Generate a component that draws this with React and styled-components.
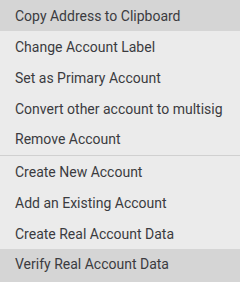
import { createGlobalStyle } from 'styled-components'
import styled from 'styled-components'

const GlobalStyle = createGlobalStyle`
  * {
    box-sizing: border-box;
  }
  body {
    margin: 0;
    background: #ebebeb;
  }
`

const groups = [
  [
    { label: 'Copy Address to Clipboard', active: true },
    { label: 'Change Account Label' },
    { label: 'Set as Primary Account' },
    { label: 'Convert other account to multisig' },
    { label: 'Remove Account' },
  ],
  [
    { label: 'Create New Account' },
    { label: 'Add an Existing Account' },
    { label: 'Create Real Account Data' },
    { label: 'Verify Real Account Data', active: true },
  ],
]

const App = () => (
  <>
    <GlobalStyle />
    <Menu>
      {groups.map((items, i) => (
        <Group key={i}>
          {items.map((item) => (
            <Item key={item.label} $active={item.active}>
              {item.label}
            </Item>
          ))}
        </Group>
      ))}
    </Menu>
  </>
)

export default App

const Menu = styled.ul`
  margin: 0;
  padding: 0;
  list-style: none;
  width: 240px;
  height: 282px;
  overflow: hidden;
  display: flex;
  flex-direction: column;
  background: #ebebeb;
  font-family: Roboto, 'Liberation Sans', sans-serif;
`

const Group = styled.li`
  display: flex;
  flex-direction: column;

  & + & {
    border-top: 1px solid #d0d0d0;
  }
  &:last-child {
    flex: 1;
  }
`

const Item = styled.div`
  min-height: 31px;
  display: flex;
  align-items: center;
  padding: 0 15px;
  font-size: 14px;
  color: #3b3b3f;
  background: ${(p) => (p.$active ? '#d5d5d5' : 'transparent')};
  white-space: nowrap;

  &:last-child {
    flex: 1;
    align-items: flex-start;
    padding-top: 7px;
  }
`
